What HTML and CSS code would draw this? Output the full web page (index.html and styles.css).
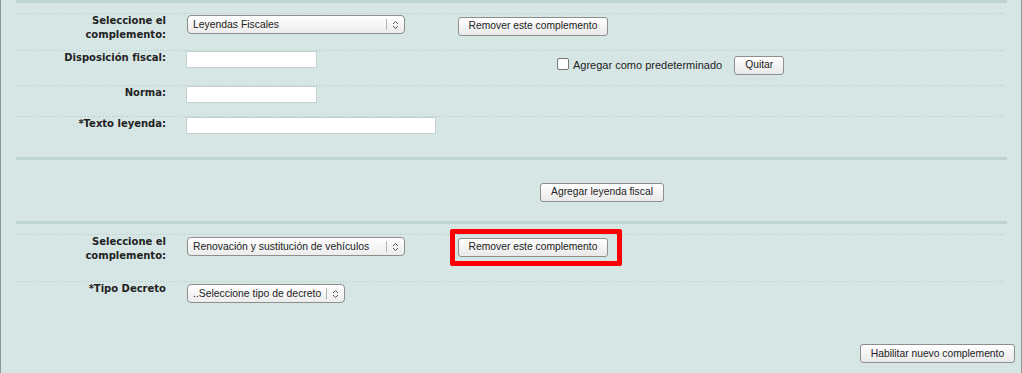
FILE: index.html
```html
<!DOCTYPE html>
<html lang="es">
<head>
<meta charset="utf-8">
<title>Complementos</title>
<link rel="stylesheet" href="styles.css">
</head>
<body>
<div class="frame">
  <div class="inner">
    <div class="topbar"></div>

    <div class="row r1">
      <label class="lbl">Seleccione el<br>complemento:</label>
      <div class="ctl">
        <span class="sel w218"><select><option>Leyendas Fiscales</option></select><span class="arr"><svg width="7" height="10" viewBox="0 0 7 10"><path d="M1 4 L3.5 1.5 L6 4 M1 6 L3.5 8.5 L6 6" fill="none" stroke="#555" stroke-width="1"/></svg></span></span>
      </div>
      <div class="act"><button class="btn">Remover este complemento</button></div>
    </div>

    <div class="row r2">
      <label class="lbl">Disposición fiscal:</label>
      <div class="ctl"><input type="text" class="txt w131"></div>
      <div class="act chk-area">
        <label class="chk"><input type="checkbox"><span>Agregar como predeterminado</span></label>
        <button class="btn">Quitar</button>
      </div>
    </div>

    <div class="row r3">
      <label class="lbl">Norma:</label>
      <div class="ctl"><input type="text" class="txt w131"></div>
      <div class="act"></div>
    </div>

    <div class="row r4">
      <label class="lbl">*Texto leyenda:</label>
      <div class="ctl"><input type="text" class="txt w250"></div>
      <div class="act"></div>
    </div>

    <div class="sep"></div>
    <div class="addrow"><button class="btn">Agregar leyenda fiscal</button></div>
    <div class="sep"></div>

    <div class="row r5">
      <label class="lbl">Seleccione el<br>complemento:</label>
      <div class="ctl">
        <span class="sel w218"><select><option>Renovación y sustitución de vehículos</option></select><span class="arr"><svg width="7" height="10" viewBox="0 0 7 10"><path d="M1 4 L3.5 1.5 L6 4 M1 6 L3.5 8.5 L6 6" fill="none" stroke="#555" stroke-width="1"/></svg></span></span>
      </div>
      <div class="act"><span class="mark"><button class="btn">Remover este complemento</button></span></div>
    </div>

    <div class="row r6">
      <label class="lbl">*Tipo Decreto</label>
      <div class="ctl">
        <span class="sel w158"><select><option>..Seleccione tipo de decreto</option></select><span class="arr"><svg width="7" height="10" viewBox="0 0 7 10"><path d="M1 4 L3.5 1.5 L6 4 M1 6 L3.5 8.5 L6 6" fill="none" stroke="#555" stroke-width="1"/></svg></span></span>
      </div>
      <div class="act"></div>
    </div>

    <div class="footer"><button class="btn">Habilitar nuevo complemento</button></div>
  </div>
</div>
</body>
</html>
```

FILE: styles.css
```css
* { box-sizing: border-box; }
html, body { margin: 0; padding: 0; }
body {
  background: #d6e6e5;
  font-family: "Liberation Sans", Arial, sans-serif;
  color: #222;
}
.frame {
  width: 1022px;
  height: 373px;
  border-left: 1px solid #8d9999;
  border-right: 1px solid #8d9999;
  background: #d6e6e5;
  overflow: hidden;
}
.inner {
  padding: 0 14px 0 15px;
}
.topbar {
  height: 3px;
  background: #bed5d2;
  margin-bottom: 10px;
}
.row {
  display: grid;
  grid-template-columns: 150px 252px 1fr;
  column-gap: 20px;
  margin-right: 2px;
  background-image: linear-gradient(to right, #b3c9c8 1px, transparent 1px);
  background-size: 3px 1px;
  background-repeat: repeat-x;
  background-position: 0 0;
  padding-top: 1px;
}
.r1 { height: 37px; }
.r2 { height: 35px; }
.r3 { height: 31px; }
.r4 { height: 41px; }
.r5 { height: 47px; margin-top: 10px; }
.r6 { height: 46px; }

.lbl {
  font-family: "DejaVu Sans", Verdana, sans-serif;
  font-weight: bold;
  font-size: 10px;
  line-height: 14px;
  text-align: right;
  color: #222;
}
.ctl { display: flex; align-items: flex-start; }
.r1 .ctl, .r1 .act { padding-top: 1px; }
.r5 .ctl { padding-top: 2px; }
.r5 .act { padding-top: 1px; }
.r6 .ctl { padding-top: 2px; }

.sel {
  display: inline-flex;
  align-items: center;
  height: 19px;
  margin-left: 1px;
  border: 1px solid #8e8e8e;
  border-radius: 4px;
  background: linear-gradient(#ffffff, #ececec);
}
.sel select {
  appearance: none;
  -webkit-appearance: none;
  border: none;
  background: transparent;
  font-family: "Liberation Sans", Arial, sans-serif;
  font-size: 10.4px;
  color: #222;
  padding: 0 0 0 5px;
  margin: 0;
  height: 17px;
  flex: 1;
  min-width: 0;
  outline: none;
}
.w218 { width: 218px; }
.w158 { width: 158px; }
.arr {
  display: flex;
  align-items: center;
  justify-content: center;
  width: 18px;
  height: 11px;
  border-left: 1px solid #b4b4b4;
}

.txt {
  height: 17px;
  border: 1px solid #c4d0d0;
  background: #fff;
  margin: 0;
  padding: 0 2px;
  font-size: 11px;
}
.w131 { width: 131px; }
.w250 { width: 250px; }

.btn {
  height: 19px;
  padding: 0;
  border: 1px solid #8e8e8e;
  border-radius: 3px;
  background: linear-gradient(#ffffff, #e9e9e9);
  font-family: "Liberation Sans", Arial, sans-serif;
  font-size: 10.3px;
  color: #222;
  line-height: 16px;
  white-space: nowrap;
  text-align: center;
  margin: 0;
}
.act .btn { width: 150px; }
.chk-area .btn { width: 50px; margin-left: 12px; }

.chk-area {
  display: flex;
  align-items: center;
  padding-top: 4px;
  padding-left: 99px;
  height: 24px;
}
.chk {
  display: inline-flex;
  align-items: center;
  font-size: 11px;
  color: #222;
}
.chk input {
  appearance: none;
  -webkit-appearance: none;
  width: 12px;
  height: 12px;
  margin: 0 4px 2px 0;
  border: 1px solid #777;
  border-radius: 2px;
  background: #fff;
}

.sep {
  height: 3px;
  background: #bed5d2;
}
.addrow {
  height: 61px;
  padding: 21px 0 0 524px;
}
.addrow .btn { width: 124px; }

.mark {
  position: relative;
  display: inline-flex;
}
.mark::after {
  content: "";
  position: absolute;
  left: -8px;
  top: -9px;
  right: -14px;
  bottom: -9px;
  border: 5px solid #ff0000;
  border-radius: 2px;
  pointer-events: none;
}

.footer {
  display: flex;
  justify-content: flex-end;
  margin-right: -8px;
  padding-top: 17px;
}
.footer .btn { width: 155px; }
```
